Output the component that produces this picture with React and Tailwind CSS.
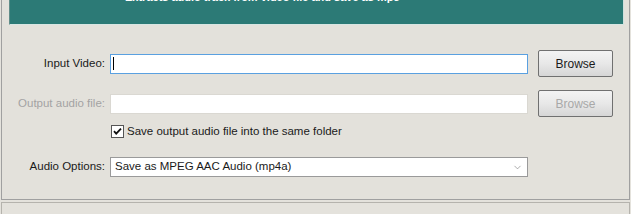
import { ChevronDown } from "lucide-react";

const font = { fontFamily: '"Liberation Sans", Arial, sans-serif' };

const BrowseButton = ({ disabled }) => (
  <button
    className={`w-[75px] h-[27px] ml-[10px] border border-[#707070] rounded-[2px] bg-gradient-to-b from-[#f3f3f3] via-[#e8e8e8] to-[#d6d6d6] text-[12px] leading-none ${
      disabled ? "text-[#a8a8a8]" : "text-[#1a1a1a]"
    }`}
  >
    Browse
  </button>
);

const Label = ({ children, disabled }) => (
  <div className={`w-[103px] text-right text-[11.5px] ${disabled ? "text-[#a3a3a3]" : "text-[#1a1a1a]"}`}>{children}</div>
);

export default function App() {
  return (
    <div className="w-[631px] h-[214px] overflow-hidden bg-[#e4e2dc]" style={font}>
      <div className="ml-[1px] w-[629px] h-[200px] border-l border-r border-b border-[#a0a0a0] bg-[#e3e1db]">
        <div className="ml-[7px] w-[615px] h-[25px] bg-[#2c7a76] border-l border-[#5f8c88] border-r border-b border-r-[#cfe0dd] border-b-[#d8e6e3] overflow-hidden flex">
          <div className="-mt-[11px] ml-[115px] text-white text-[11px] font-bold whitespace-nowrap">
            Extracts audio track from video file and save as mp3
          </div>
        </div>

        <div className="flex items-center h-[27px] mt-[25px]">
          <Label>Input Video:</Label>
          <div className="ml-[5px] w-[418px] h-[20px] bg-white border border-[#5aa0e0] flex items-center pl-[2px]">
            <div className="w-[1px] h-[13px] bg-black" />
          </div>
          <BrowseButton />
        </div>

        <div className="flex items-center h-[27px] mt-[13px]">
          <Label disabled>Output audio file:</Label>
          <div className="ml-[5px] w-[418px] h-[20px] bg-white border border-[#dad8d2]" />
          <BrowseButton disabled />
        </div>

        <div className="flex items-center h-[13px] mt-[8px] pl-[109px]">
          <svg width="13" height="13" viewBox="0 0 13 13">
            <rect x="0.5" y="0.5" width="12" height="12" fill="#fff" stroke="#555" />
            <path d="M3 6.2 L5.2 8.6 L10 3.6" fill="none" stroke="#111" strokeWidth="1.8" />
          </svg>
          <span className="ml-[3px] text-[11.5px] text-[#1a1a1a]">Save output audio file into the same folder</span>
        </div>

        <div className="flex items-center h-[20px] mt-[19px]">
          <Label>Audio Options:</Label>
          <div className="ml-[5px] w-[418px] h-[20px] bg-white border border-[#9a9a9a] flex items-center justify-between pl-[4px] pr-[4px]">
            <span className="text-[11.5px] text-[#1a1a1a]">Save as MPEG AAC Audio (mp4a)</span>
            <ChevronDown className="w-[11px] h-[11px] text-[#777]" strokeWidth={1.3} />
          </div>
        </div>
      </div>
      <div className="ml-[1px] mt-[2px] w-[629px] h-[12px] border-t border-l border-r border-[#b5b3ad] bg-[#e4e2dc]" />
    </div>
  );
}
